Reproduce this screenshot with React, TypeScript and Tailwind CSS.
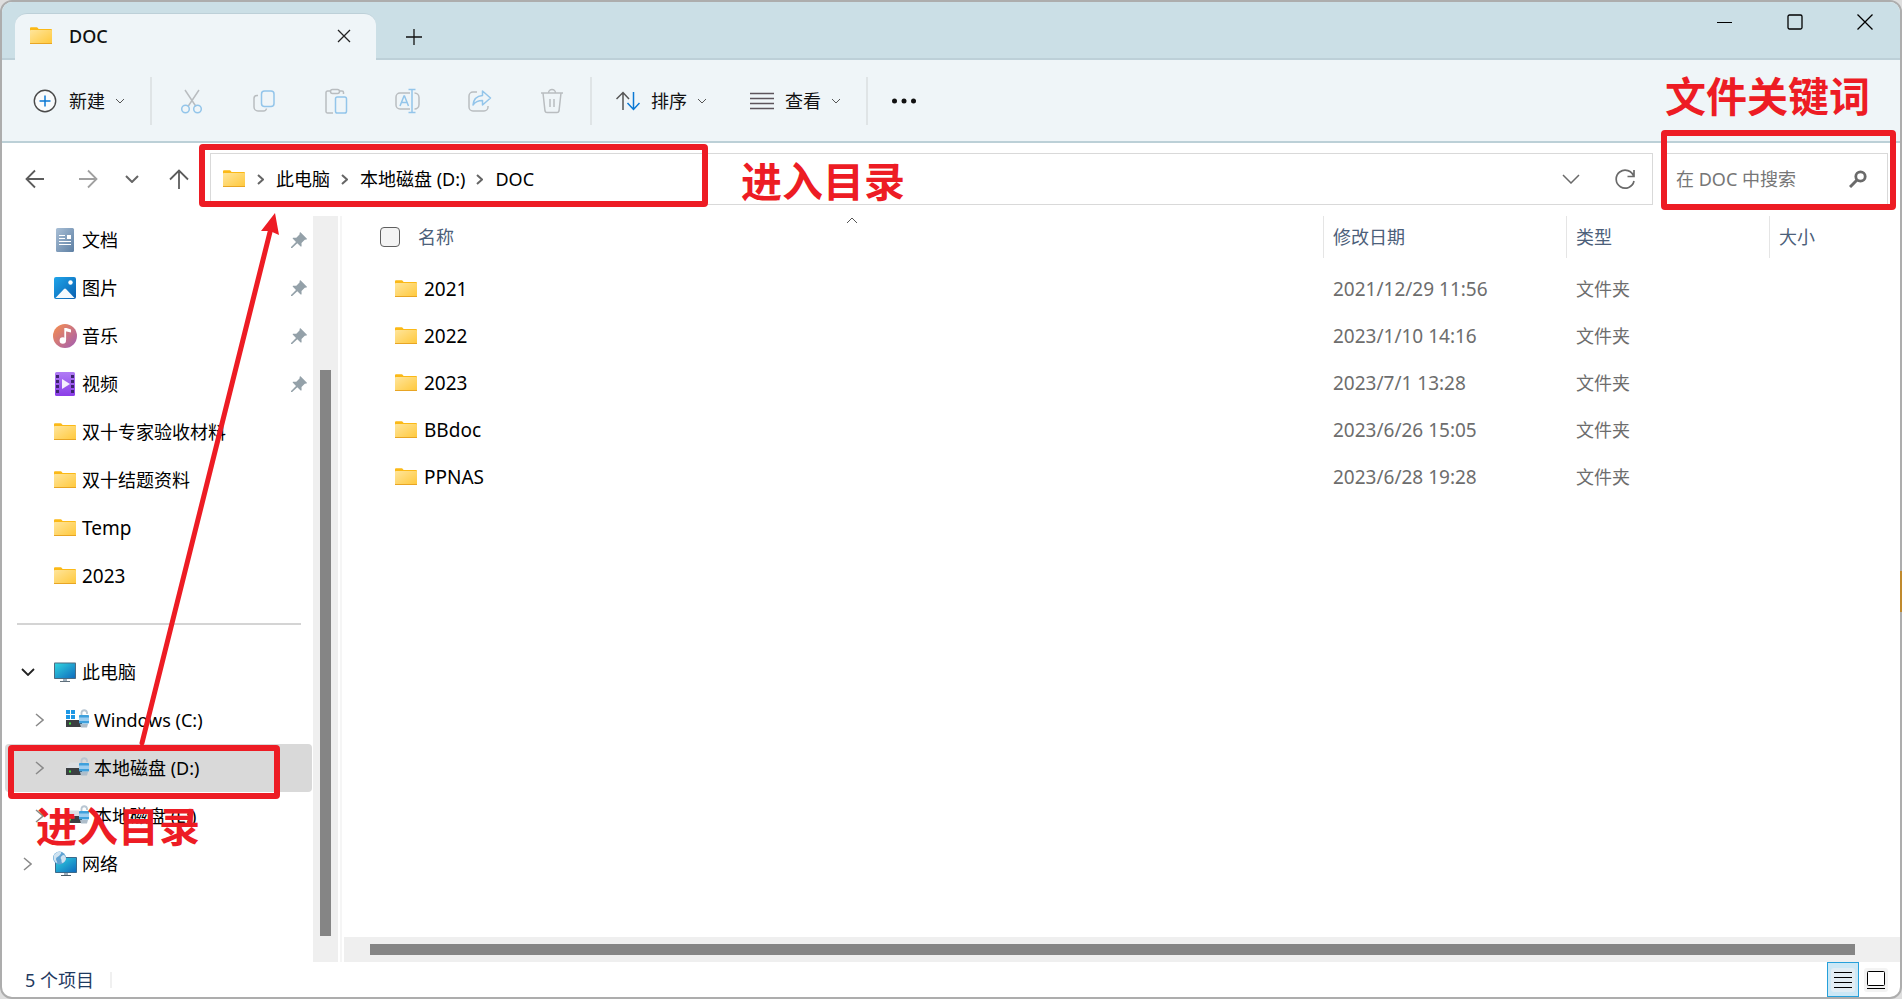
import React from 'react';

type IconProps = { className?: string };

const FolderIcon: React.FC<IconProps> = ({ className }) => (
  <svg width="24" height="20" viewBox="0 0 24 20" className={className} aria-hidden="true">
    <defs>
      <linearGradient id="folder-front" x1="0" y1="0" x2="1" y2="1">
        <stop offset="0" stopColor="#ffe59b" />
        <stop offset="1" stopColor="#ffc83a" />
      </linearGradient>
    </defs>
    <path d="M1 2.2a1 1 0 0 1 1-1h5.6a1 1 0 0 1 .8.4L9.6 3H22a1 1 0 0 1 1 1v4H1z" fill="#fbb917" />
    <rect x="1" y="4" width="22" height="14" rx="0.8" fill="url(#folder-front)" />
    <path d="M1 17.5h22" stroke="#e8a524" />
  </svg>
);

const DocumentIcon: React.FC = () => (
  <svg width="24" height="24" viewBox="0 0 24 24" aria-hidden="true">
    <defs>
      <linearGradient id="doc-bg" x1="0" y1="0" x2="1" y2="1">
        <stop offset="0" stopColor="#a9bfd6" />
        <stop offset="1" stopColor="#5d7fa3" />
      </linearGradient>
    </defs>
    <rect x="3" y="0" width="18" height="24" rx="1.5" fill="url(#doc-bg)" />
    <path d="M6 7.5h6M6 10.5h6M6 13.5h12M6 16.5h12" stroke="#fff" strokeWidth="1.2" />
    <rect x="14" y="7" width="4" height="4" fill="#fff" />
  </svg>
);

const PictureIcon: React.FC = () => (
  <svg width="24" height="24" viewBox="0 0 24 24" aria-hidden="true">
    <defs>
      <linearGradient id="pic-bg" x1="0" y1="0" x2="1" y2="1">
        <stop offset="0" stopColor="#1fa5ea" />
        <stop offset="1" stopColor="#0a5fb0" />
      </linearGradient>
    </defs>
    <rect x="1" y="1" width="22" height="22" rx="2" fill="url(#pic-bg)" />
    <path d="M2.5 22 11 13a1.5 1.5 0 0 1 2 0l8.5 9z" fill="#f4f9fd" />
    <circle cx="17.5" cy="6.5" r="2.2" fill="#fff" />
  </svg>
);

const MusicIcon: React.FC = () => (
  <svg width="24" height="24" viewBox="0 0 24 24" aria-hidden="true">
    <defs>
      <linearGradient id="music-bg" x1="0" y1="0" x2="1" y2="1">
        <stop offset="0.1" stopColor="#f08a55" />
        <stop offset="1" stopColor="#a05cb5" />
      </linearGradient>
    </defs>
    <circle cx="12" cy="12" r="12" fill="url(#music-bg)" />
    <path d="M12.2 4.2v12" stroke="#fff" strokeWidth="1.8" />
    <path d="M11.5 4h2l4.5 1.5v3l-5.5-1.3z" fill="#fff" />
    <circle cx="9.8" cy="16.5" r="3.2" fill="#fff" />
  </svg>
);

const VideoIcon: React.FC = () => (
  <svg width="24" height="24" viewBox="0 0 24 24" aria-hidden="true">
    <defs>
      <linearGradient id="video-bg" x1="0" y1="0" x2="0" y2="1">
        <stop offset="0" stopColor="#b07cf5" />
        <stop offset="1" stopColor="#8b3ee8" />
      </linearGradient>
    </defs>
    <rect x="2" y="0" width="20" height="24" rx="1.5" fill="url(#video-bg)" />
    <path d="M4.5 3v19M19.5 3v19" stroke="#3d2470" strokeWidth="3" strokeDasharray="3 2" />
    <path d="M9 7v10l8-5z" fill="#f4effc" />
  </svg>
);

const MonitorIcon: React.FC = () => (
  <svg width="24" height="24" viewBox="0 0 24 24" aria-hidden="true">
    <defs>
      <linearGradient id="screen-bg" x1="0" y1="0" x2="1" y2="1">
        <stop offset="0" stopColor="#31d3e0" />
        <stop offset="1" stopColor="#0f6cbd" />
      </linearGradient>
    </defs>
    <rect x="1" y="2.5" width="22" height="16.5" rx="0.8" fill="#4d6a80" />
    <rect x="2" y="3.5" width="20" height="14.5" fill="url(#screen-bg)" />
    <path d="M10 19h4v2h-4z" fill="#9fb0bd" />
    <path d="M7 21.5h10" stroke="#5f6f7b" />
  </svg>
);

const NetworkIcon: React.FC = () => (
  <svg width="24" height="26" viewBox="0 0 24 26" aria-hidden="true">
    <rect x="2" y="6" width="22" height="16" rx="0.8" fill="#3b6a8c" />
    <rect x="3" y="7" width="20" height="14" fill="url(#screen-bg)" />
    <path d="M11 22h4v2h-4z" fill="#9fb0bd" />
    <path d="M8 24.5h10" stroke="#4a5a66" />
    <circle cx="6.5" cy="7" r="6.5" fill="#5fa3d3" />
    <path d="M1 4c2-3 5-4 7-3 1 1-1 3-2 4s-3 1-3 3 2 3 1 4C1 11 0 7 1 4zM10 4c2 0 3 2 3 4-1 3-3 4-4 4-1-2 0-3-1-4s0-3 2-4z" fill="#cfe3f1" />
  </svg>
);

const DriveIcon: React.FC<{ system?: boolean }> = ({ system }) => (
  <svg width="24" height="24" viewBox="0 0 24 24" aria-hidden="true">
    {system ? (
      <path d="M1 2h4v4H1zM6 2h4v4H6zM1 7h4v4H1zM6 7h4v4H6z" fill="#1e97e4" />
    ) : (
      <path d="M1 12 5 6.5h9V12z" fill="#dcdfe3" />
    )}
    <rect x="1" y="12" width="16" height="7" fill="#3c3f42" />
    <rect x="4" y="14.5" width="2" height="2" fill="#3fe33f" />
    <path d="M16.5 7V4.5a2.8 2.8 0 0 1 5.5 0V6" fill="none" stroke="#b9c6d2" strokeWidth="1.8" />
    <rect x="14" y="7" width="10" height="8.5" rx="0.8" fill="#3fa0dc" />
    <path d="M14 9.5h10v3.5H14z" fill="#9ccdf0" />
    <path d="M15 16h8l-1 3.5h-6z" fill="#aebdca" />
  </svg>
);

const PinIcon: React.FC = () => (
  <svg width="18" height="18" viewBox="0 0 18 18" aria-hidden="true">
    <path
      d="M10.5 1.3 16.7 7.5c.4.4.1 1-.4 1l-1.5.3-3.3 3.3.1 2.9c0 .6-.6.8-1 .4L7.3 12.2 2.2 17.1H1v-1.2L6 10.9 2.9 7.8c-.4-.4-.1-1 .4-1l3-.1L9.5 3.4l.2-1.7c0-.5.5-.7.8-.4z"
      fill="#94a1a9"
    />
  </svg>
);

const Chevron: React.FC<{ dir: 'down' | 'right' | 'up'; w: number; h: number; className?: string; stroke?: number }> = ({
  dir,
  w,
  h,
  className,
  stroke = 1.5,
}) => {
  const paths = {
    down: `M1 1 L${w / 2} ${h - 1} L${w - 1} 1`,
    up: `M1 ${h - 1} L${w / 2} 1 L${w - 1} ${h - 1}`,
    right: `M1 1 L${w - 1} ${h / 2} L1 ${h - 1}`,
  };
  return (
    <svg width={w} height={h} viewBox={`0 0 ${w} ${h}`} className={className} fill="none" stroke="currentColor" strokeWidth={stroke} aria-hidden="true">
      <path d={paths[dir]} />
    </svg>
  );
};

const toolIcons = [
  {
    label: '剪切',
    icon: (
      <>
        <path d="M6 2 17 18.5M20 2 9 18.5" stroke="#b9bdc0" />
        <circle cx="6.5" cy="21" r="3.8" stroke="#93c5ea" />
        <circle cx="18.5" cy="21" r="3.8" stroke="#93c5ea" />
      </>
    ),
  },
  {
    label: '复制',
    icon: (
      <>
        <path d="M7 7.5H6a3 3 0 0 0-3 3V19a4 4 0 0 0 4 4h5.5a3 3 0 0 0 3-2.5" stroke="#b9bdc0" />
        <rect x="10.5" y="3" width="12.5" height="15.5" rx="3" stroke="#93c5ea" />
      </>
    ),
  },
  {
    label: '粘贴',
    icon: (
      <>
        <path d="M10 25H4.5A1.5 1.5 0 0 1 3 23.5v-19A1.5 1.5 0 0 1 4.5 3H8M16 3h3a1.5 1.5 0 0 1 1.5 1.5V6" stroke="#b9bdc0" />
        <rect x="7.5" y="1.5" width="9" height="4" rx="2" stroke="#b9bdc0" />
        <rect x="12.5" y="9" width="11" height="16" rx="1.8" stroke="#93c5ea" />
      </>
    ),
  },
  {
    label: '重命名',
    icon: (
      <>
        <path d="M15 5H5a4 4 0 0 0-4 4v8a4 4 0 0 0 4 4h10M19.5 5a4.5 4.5 0 0 1 4.5 4.5v7a4.5 4.5 0 0 1-4.5 4.5" stroke="#b9bdc0" />
        <path d="m5 18 4-10h.5l4 10M6.5 14.5h5.5M17 1.5v23M13.5 1.5h7M13.5 24.5h7" stroke="#93c5ea" />
      </>
    ),
  },
  {
    label: '共享',
    icon: (
      <>
        <path d="M10 4H6a4 4 0 0 0-4 4v11a4 4 0 0 0 4 4h11a4 4 0 0 0 4-4v-1" stroke="#b9bdc0" />
        <path d="M15.5 3v4.5C10 8 6.5 11 6 17c2.5-3.5 5.5-4.5 9.5-4.5V17l8-7z" stroke="#93c5ea" strokeLinejoin="round" />
      </>
    ),
  },
  {
    label: '删除',
    icon: (
      <>
        <path d="M2 5h22M9.5 5a3.5 3.5 0 0 1 7 0M4 5l2 18a2 2 0 0 0 2 1.5h10a2 2 0 0 0 2-1.5L22 5M11 11v8M15 11v8" stroke="#b9bdc0" />
      </>
    ),
  },
];

const quickAccess = [
  { name: '文档', icon: <DocumentIcon />, pinned: true },
  { name: '图片', icon: <PictureIcon />, pinned: true },
  { name: '音乐', icon: <MusicIcon />, pinned: true },
  { name: '视频', icon: <VideoIcon />, pinned: true },
  { name: '双十专家验收材料', icon: <FolderIcon /> },
  { name: '双十结题资料', icon: <FolderIcon /> },
  { name: 'Temp', icon: <FolderIcon />, latin: true },
  { name: '2023', icon: <FolderIcon />, latin: true },
];

const drives = [
  { name: 'Windows (C:)', system: true },
  { name: '本地磁盘 (D:)', selected: true },
  { name: '本地磁盘 (E:)' },
];

const files = [
  { name: '2021', date: '2021/12/29 11:56' },
  { name: '2022', date: '2023/1/10 14:16' },
  { name: '2023', date: '2023/7/1 13:28' },
  { name: 'BBdoc', date: '2023/6/26 15:05' },
  { name: 'PPNAS', date: '2023/6/28 19:28' },
];

const crumbs = ['此电脑', '本地磁盘 (D:)', 'DOC'];

const TitleBar: React.FC = () => (
  <header className="flex h-[58px] shrink-0 items-end justify-between bg-[#cbdfe6] shadow-[inset_0_-2px_0_#bdd0d8]">
    <div className="flex items-end">
      <div className="ml-[13px] flex h-[47px] w-[361px] items-center rounded-t-xl border-t border-[#bdd0d8] bg-[#eff5f8] pr-[16px] pb-[2px] pl-[14px]">
        <FolderIcon />
        <span className="ml-4 flex-1 font-medium">DOC</span>
        <button type="button" aria-label="关闭标签页" className="flex h-8 w-8 items-center justify-center">
          <svg width="14" height="14" viewBox="0 0 14 14" stroke="#222" strokeWidth="1.3" aria-hidden="true">
            <path d="m1 1 12 12M13 1 1 13" />
          </svg>
        </button>
      </div>
      <button type="button" aria-label="新建标签页" className="ml-[22px] flex h-[47px] w-8 items-center justify-center">
        <svg width="16" height="16" viewBox="0 0 16 16" stroke="#111" strokeWidth="1.3" aria-hidden="true">
          <path d="M8 0v16M0 8h16" />
        </svg>
      </button>
    </div>
    <div className="flex h-full items-start">
      <button type="button" aria-label="最小化" className="flex h-10 w-[70px] items-center justify-center">
        <svg width="16" height="16" viewBox="0 0 16 16" stroke="#000" aria-hidden="true">
          <path d="M0 8.5h15" />
        </svg>
      </button>
      <button type="button" aria-label="最大化" className="flex h-10 w-[70px] items-center justify-center">
        <svg width="16" height="16" viewBox="0 0 16 16" fill="none" stroke="#000" strokeWidth="1.3" aria-hidden="true">
          <rect x="1" y="1" width="14" height="14" rx="1.5" />
        </svg>
      </button>
      <button type="button" aria-label="关闭" className="flex h-10 w-[70px] items-center justify-center">
        <svg width="16" height="16" viewBox="0 0 16 16" stroke="#000" strokeWidth="1.3" aria-hidden="true">
          <path d="M.5.5l15 15M15.5.5l-15 15" />
        </svg>
      </button>
    </div>
  </header>
);

const Separator: React.FC = () => <div className="h-12 w-[2px] bg-[#dfe4e6]" />;

const Toolbar: React.FC = () => (
  <div className="flex h-[83px] shrink-0 items-center border-b-2 border-[#bcd0d7] bg-[#eff5f8] pl-[31px]">
    <button type="button" className="flex items-center">
      <svg width="24" height="24" viewBox="0 0 24 24" fill="none" aria-hidden="true">
        <circle cx="12" cy="12" r="10.7" fill="#f9fbfc" stroke="#4a4a4a" strokeWidth="1.4" />
        <path d="M12 6.5v11M6.5 12h11" stroke="#0a78d4" strokeWidth="1.5" />
      </svg>
      <span className="ml-3">新建</span>
      <Chevron dir="down" w={10} h={6} stroke={1} className="ml-[10px] text-[#555]" />
    </button>
    <div className="ml-[25px]">
      <Separator />
    </div>
    <div className="ml-1 flex">
      {toolIcons.map((tool) => (
        <button key={tool.label} type="button" disabled aria-label={tool.label} className="flex h-12 w-[72px] items-center justify-center">
          <svg width="26" height="26" viewBox="0 0 26 26" fill="none" strokeWidth="1.5" aria-hidden="true">
            {tool.icon}
          </svg>
        </button>
      ))}
    </div>
    <div className="ml-[2px]">
      <Separator />
    </div>
    <button type="button" className="ml-6 flex items-center">
      <svg width="24" height="20" viewBox="0 0 24 20" fill="none" strokeWidth="1.5" aria-hidden="true">
        <path d="M7 19V1.5M.5 8 7 1.5 13 8" stroke="#555" />
        <path d="M17.5 1v17.5M11.5 12l6 6.5 6-6.5" stroke="#0a78d4" />
      </svg>
      <span className="ml-[11px]">排序</span>
      <Chevron dir="down" w={10} h={6} stroke={1} className="ml-[10px] text-[#555]" />
    </button>
    <button type="button" className="ml-[43px] flex items-center">
      <svg width="24" height="18" viewBox="0 0 24 18" stroke="#5d555c" strokeWidth="1.3" aria-hidden="true">
        <path d="M0 1.5h24M0 6.5h24M0 11.5h24M0 16.5h24" />
      </svg>
      <span className="ml-[11px]">查看</span>
      <Chevron dir="down" w={10} h={6} stroke={1} className="ml-[10px] text-[#555]" />
    </button>
    <div className="ml-[25px]">
      <Separator />
    </div>
    <button type="button" aria-label="更多" className="ml-6 flex h-10 items-center">
      <svg width="24" height="6" viewBox="0 0 24 6" fill="#111" aria-hidden="true">
        <circle cx="2.5" cy="3" r="2.5" />
        <circle cx="12" cy="3" r="2.5" />
        <circle cx="21.5" cy="3" r="2.5" />
      </svg>
    </button>
  </div>
);

const AddressRow: React.FC = () => (
  <div className="flex h-[73px] shrink-0 items-start pt-[10px] pr-3">
    <div className="flex h-[52px] w-[208px] shrink-0 items-center pl-[23px] text-[#666]">
      <button type="button" aria-label="后退">
        <svg width="20" height="20" viewBox="0 0 20 20" fill="none" stroke="#5c5c5c" strokeWidth="1.8" aria-hidden="true">
          <path d="M19 10H2M10 1.5 1.5 10l8.5 8.5" />
        </svg>
      </button>
      <button type="button" aria-label="前进" className="ml-[33px]">
        <svg width="20" height="20" viewBox="0 0 20 20" fill="none" stroke="#a0a0a0" strokeWidth="1.8" aria-hidden="true">
          <path d="M1 10h17M10 1.5l8.5 8.5-8.5 8.5" />
        </svg>
      </button>
      <button type="button" aria-label="最近浏览的位置" className="ml-[27px]">
        <Chevron dir="down" w={14} h={8} stroke={2} className="text-[#666]" />
      </button>
      <button type="button" aria-label="上移" className="ml-[30px]">
        <svg width="20" height="20" viewBox="0 0 20 20" fill="none" stroke="#5c5c5c" strokeWidth="1.8" aria-hidden="true">
          <path d="M10 20V1.5M1 10.5l9-9 9 9" />
        </svg>
      </button>
    </div>
    <div className="flex h-[52px] flex-1 items-center border border-[#d9d9d9] pr-[16px] pl-[11px]">
      <FolderIcon />
      <nav aria-label="路径" className="flex flex-1 items-center">
        {crumbs.map((crumb) => (
          <span key={crumb} className="flex items-center">
            <Chevron dir="right" w={7} h={11} stroke={2} className="mr-3 ml-[11px] text-[#666]" />
            <a href="#" className="text-black">{crumb}</a>
          </span>
        ))}
      </nav>
      <button type="button" aria-label="以前的位置" className="flex h-8 w-[54px] items-center justify-center">
        <Chevron dir="down" w={18} h={10} className="text-[#6a6a6a]" />
      </button>
      <button type="button" aria-label="刷新" className="ml-[16px] flex h-8 w-[22px] items-center justify-center">
        <svg width="22" height="22" viewBox="0 0 22 22" fill="none" stroke="#6a6a6a" strokeWidth="1.7" aria-hidden="true">
          <path d="M19.8 8.5A9 9 0 1 0 20 13M20 2v6.5h-6.5" />
        </svg>
      </button>
    </div>
    <label className="ml-2 flex h-[52px] w-[227px] items-center border border-[#d9d9d9] pr-5 pl-[14px]">
      <input type="text" aria-label="搜索" placeholder="在 DOC 中搜索" className="w-0 flex-1 bg-transparent outline-none placeholder:text-[#767676]" />
      <svg width="18" height="18" viewBox="0 0 18 18" fill="none" stroke="#6a6a6a" aria-hidden="true">
        <circle cx="11.5" cy="6.5" r="4.7" strokeWidth="2.8" />
        <path d="m8 10-7 7" strokeWidth="3" />
      </svg>
    </label>
  </div>
);

type TreeRowProps = {
  name: string;
  icon: React.ReactNode;
  chevron?: 'down' | 'right';
  nested?: boolean;
  selected?: boolean;
  pinned?: boolean;
  latin?: boolean;
};

const TreeRow: React.FC<TreeRowProps> = ({ name, icon, chevron, nested, selected, pinned, latin }) => (
  <li className={`ml-[3px] mr-px flex h-12 items-center rounded-sm pr-1 ${nested ? 'pl-3' : ''} ${selected ? 'bg-[#d9d9d9]' : ''}`}>
    <span className="flex w-12 shrink-0 items-center pl-4">
      {chevron === 'down' && <Chevron dir="down" w={14} h={8} stroke={1.8} className="text-[#222]" />}
      {chevron === 'right' && <Chevron dir="right" w={9} h={14} className="ml-[2px] text-[#8a8a8a]" />}
    </span>
    <span className="shrink-0">{icon}</span>
    <a href="#" className={`ml-[5px] flex-1 text-black ${latin ? 'text-[19px]' : ''}`}>{name}</a>
    {pinned && <PinIcon />}
  </li>
);

const Sidebar: React.FC = () => (
  <aside className="flex w-[340px] shrink-0 border-r-2 border-[#f5f5f5]">
    <div className="flex-1">
      <ul>
        {quickAccess.map((item) => (
          <TreeRow key={item.name} {...item} />
        ))}
      </ul>
      <div className="flex h-12 items-center pr-3 pl-[15px]">
        <hr className="w-full border-t-2 border-[#d4d4d4]" />
      </div>
      <ul>
        <TreeRow name="此电脑" icon={<MonitorIcon />} chevron="down" />
        {drives.map((drive) => (
          <TreeRow key={drive.name} name={drive.name} icon={<DriveIcon system={drive.system} />} chevron="right" selected={drive.selected} nested />
        ))}
        <TreeRow name="网络" icon={<NetworkIcon />} chevron="right" />
      </ul>
    </div>
    <div className="mr-[2px] w-[25px] bg-[#efefef] px-[7px] pt-[154px] pb-[26px]">
      <div className="h-full bg-[#858585]" />
    </div>
  </aside>
);

const FileTable: React.FC = () => (
  <table className="w-full table-fixed text-left">
    <colgroup>
      <col />
      <col className="w-[243px]" />
      <col className="w-[203px]" />
      <col className="w-[131px]" />
    </colgroup>
    <thead>
      <tr className="h-[49px] align-top text-[#4c607a]">
        <th className="relative p-0 font-normal">
          <div className="flex h-[42px] items-center pl-9">
            <input type="checkbox" aria-label="全选" className="h-5 w-5 appearance-none rounded border border-[#5f5f5f] bg-[#f3f3f3]" />
            <span className="ml-[18px]">名称</span>
          </div>
          <Chevron dir="up" w={12} h={7} stroke={1} className="absolute top-px left-1/2 ml-3 text-[#555]" />
        </th>
        {['修改日期', '类型', '大小'].map((title) => (
          <th key={title} className="p-0 font-normal">
            <div className="flex h-[42px] items-center border-l border-[#e5e5e5] pl-[9px]">{title}</div>
          </th>
        ))}
      </tr>
    </thead>
    <tbody>
      {files.map((file) => (
        <tr key={file.name} className="h-[47px] text-[#6d6d6d]">
          <td className="p-0">
            <div className="flex items-center pl-[50px]">
              <FolderIcon />
              <a href="#" className="ml-[6px] text-[19px] text-black">{file.name}</a>
            </div>
          </td>
          <td className="p-0 pl-[10px] text-[19px]">{file.date}</td>
          <td className="p-0 pl-[10px]">文件夹</td>
          <td className="p-0" />
        </tr>
      ))}
    </tbody>
  </table>
);

const StatusBar: React.FC = () => (
  <footer className="flex h-[35px] shrink-0 items-center justify-between pr-3 pl-[23px] text-[#1f3a5f]">
    <div className="flex items-center">
      <span>5 个项目</span>
      <span className="ml-4 h-4 w-[2px] bg-[#f0f0f0]" />
    </div>
    <div className="flex h-full items-center">
      <button type="button" aria-label="详细信息" className="flex h-full w-8 items-center justify-center border border-[#26a0da] bg-[#cce8f6]">
        <svg width="24" height="24" viewBox="0 0 24 24" aria-hidden="true">
          <rect width="24" height="24" rx="3" fill="#e2edf4" />
          <path d="M3 4.5h18M3 9.5h18M3 14.5h18M3 19.5h18" stroke="#000" />
        </svg>
      </button>
      <button type="button" aria-label="大缩略图" className="ml-[5px]">
        <svg width="24" height="24" viewBox="0 0 24 24" aria-hidden="true">
          <rect width="24" height="24" rx="3" fill="#f3f3f3" />
          <rect x="3.5" y="3.5" width="17" height="14" rx="1" fill="#fff" stroke="#000" />
          <path d="M3 20.5h18" stroke="#000" />
        </svg>
      </button>
    </div>
  </footer>
);

// Red guide marks drawn on top of the window
const Annotations: React.FC = () => (
  <div className="pointer-events-none absolute inset-0 text-[41px] leading-[48px] font-bold text-[#ed1c24]">
    <div className="absolute top-[144px] left-[199px] h-[63px] w-[509px] rounded border-6 border-[#ed1c24]" />
    <div className="absolute top-[130px] right-[6px] h-[80px] w-[235px] rounded border-6 border-[#ed1c24]" />
    <div className="absolute top-[745px] left-[8px] h-[54px] w-[272px] rounded border-6 border-[#ed1c24]" />
    <p className="absolute top-[157px] left-[741px]">进入目录</p>
    <p className="absolute top-[72px] right-[32px]">文件关键词</p>
    <p className="absolute top-[802px] left-[36px]">进入目录</p>
    <svg width="160" height="540" viewBox="0 0 160 540" className="absolute top-[210px] left-[130px]" aria-hidden="true">
      <path d="M12 533 140 22" stroke="#ed1c24" strokeWidth="5" strokeLinecap="round" />
      <path d="M145 3 149 25 140 21 131 21z" fill="#ed1c24" />
    </svg>
  </div>
);

const App: React.FC = () => (
  <div className="relative h-screen overflow-hidden bg-[#dedede] font-['Noto_Sans','Noto_Sans_CJK_SC',sans-serif] text-[18px] leading-6 text-[#111]">
    <div className="flex h-full flex-col overflow-hidden rounded-xl border-2 border-[#adadad] bg-white">
      <TitleBar />
      <Toolbar />
      <AddressRow />
      <main className="flex min-h-0 flex-1">
        <Sidebar />
        <section className="ml-[2px] flex flex-1 flex-col">
          <div className="flex-1">
            <FileTable />
          </div>
          <div className="h-[25px] bg-[#efefef] py-[7px] pr-[45px] pl-[26px]">
            <div className="h-full bg-[#858585]" />
          </div>
        </section>
      </main>
      <StatusBar />
    </div>
    <div className="absolute top-[571px] right-0 h-[41px] w-[2px] bg-[#c08a2e]" />
    <Annotations />
  </div>
);

export default App;
